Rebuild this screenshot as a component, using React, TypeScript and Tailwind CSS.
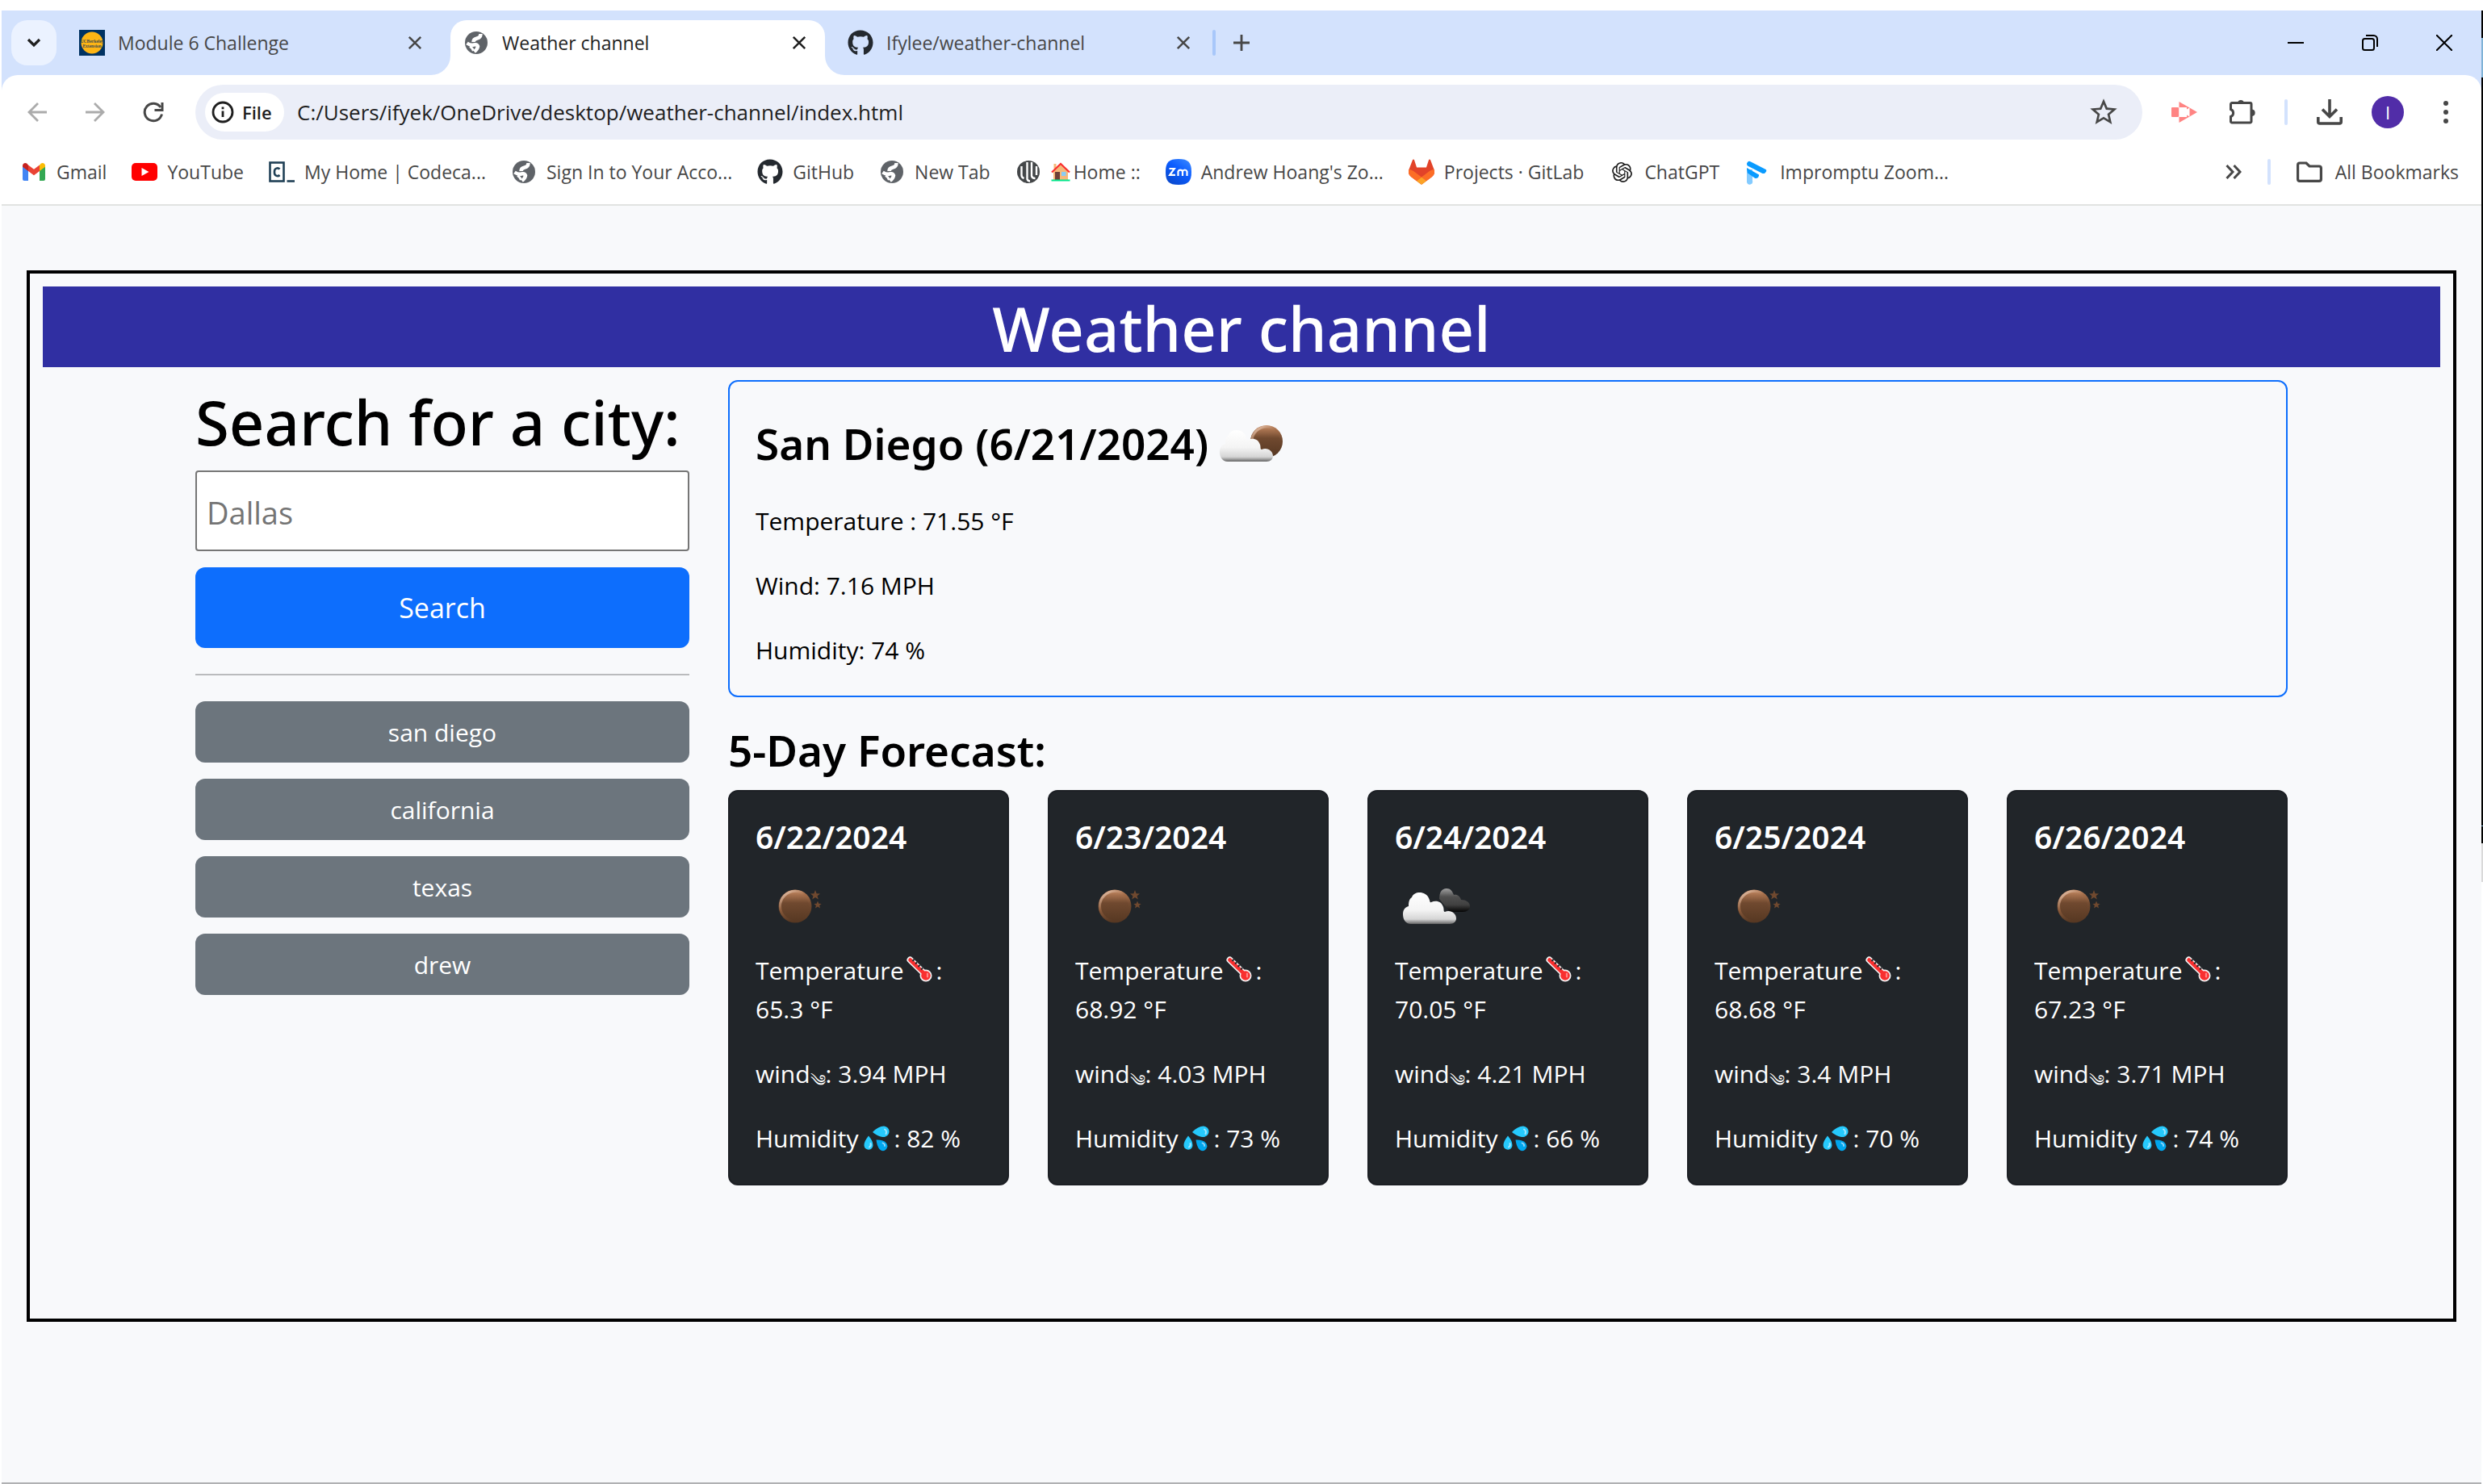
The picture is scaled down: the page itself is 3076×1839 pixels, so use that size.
import type { ReactNode } from "react";
import { FaGithub } from "react-icons/fa";
import { MdStarBorder } from "react-icons/md";
import { SiOpenai } from "react-icons/si";

/* ---------- small icons ---------- */

function CrossIcon({ className }: { className: string }) {
  return (
    <svg viewBox="0 0 20 20" className={className} fill="none" stroke="currentColor" strokeWidth="2.8">
      <path d="M2 2L18 18M18 2L2 18" />
    </svg>
  );
}

function GlobeIcon() {
  return (
    <svg viewBox="0 0 32 32" className="size-8 shrink-0" aria-hidden="true">
      <circle cx="16" cy="16" r="14" fill="#5f6368" />
      <g fill="none" stroke="#fff" strokeLinejoin="round">
        <path d="M21.500 5Q21.500 9.500 17 10.500T12.500 15" strokeWidth="4.500" />
        <path d="M4.500 16.500Q9 19.500 13 18.500T18 20.500Q17.500 24 13.500 27" strokeWidth="4.500" />
        <path d="M8 20.500Q11 22 12.500 26" strokeWidth="3" />
      </g>
    </svg>
  );
}

function BerkeleyIcon() {
  return (
    <svg viewBox="0 0 32 32" className="size-8 shrink-0" aria-hidden="true">
      <rect width="32" height="32" fill="#003262" />
      <circle cx="16" cy="16" r="13.500" fill="#fdb515" />
      <text x="16" y="15.500" textAnchor="middle" fontSize="5.500" fontFamily="Liberation Serif, serif" fontWeight="700" fill="#3b4a52">UCBerkeley</text>
      <text x="16" y="21.500" textAnchor="middle" fontSize="5.500" fontFamily="Liberation Serif, serif" fontWeight="700" fill="#3b4a52">Extension</text>
    </svg>
  );
}

function GmailIcon() {
  return (
    <svg viewBox="0 0 32 32" className="size-8" aria-hidden="true">
      <path d="M2 9v16a2 2 0 0 0 2 2h5V14z" fill="#4285f4" />
      <path d="M30 9v16a2 2 0 0 1-2 2h-5V14z" fill="#34a853" />
      <path d="M23 7.500V15l7-5.200V8.200c0-2.700-3-4.200-5.200-2.600z" fill="#fbbc04" />
      <path d="M9 15V7.500l7 5.300 7-5.300V15l-7 5.300z" fill="#ea4335" />
      <path d="M2 8.200v1.600L9 15V7.500L7.200 5.600C5 4 2 5.500 2 8.200z" fill="#c5221f" />
    </svg>
  );
}

function YouTubeIcon() {
  return (
    <svg viewBox="0 0 32 32" className="size-8" aria-hidden="true">
      <rect y="5" width="32" height="22" rx="5" fill="#f00" />
      <path d="M12.500 11v10l9-5z" fill="#fff" />
    </svg>
  );
}

function CodecademyIcon() {
  return (
    <svg viewBox="0 0 32 32" className="size-8" aria-hidden="true" fill="none" stroke="#204056">
      <rect x="1.500" y="4.500" width="17" height="23" strokeWidth="2.600" />
      <path d="M13.500 12.500a3.800 3.800 0 0 0-6.500 2.500v2.500a3.800 3.800 0 0 0 6.500 2.500" strokeWidth="2.600" />
      <path d="M22.500 27.500H32" strokeWidth="2.600" />
    </svg>
  );
}

function PianoIcon() {
  return (
    <svg viewBox="0 0 32 32" className="size-8" aria-hidden="true">
      <circle cx="16" cy="16" r="14" fill="#444749" />
      <path d="M7.500 9v11q0 3 3 4M14.500 4v21q1 2.500 3.500 2.500M20 4v17q.5 3 4.500 3M26 9v11" fill="none" stroke="#fff" strokeWidth="2.400" />
    </svg>
  );
}

function ZoomIcon() {
  return (
    <svg viewBox="0 0 32 32" className="size-8" aria-hidden="true">
      <defs>
        <linearGradient id="zoomFill" x1="1" y1="0" x2="0.300" y2="1">
          <stop offset="0" stopColor="#3f8cff" />
          <stop offset="0.500" stopColor="#0b5cff" />
          <stop offset="1" stopColor="#0a4ad0" />
        </linearGradient>
      </defs>
      <path d="M16 0C28 0 32 4 32 16S28 32 16 32 0 28 0 16 4 0 16 0Z" fill="url(#zoomFill)" />
      <path d="M4.500 12h6.300L5.200 19.800h6.800M15.500 21v-5.500a3 3 0 0 1 5.500 0V21M21 15.500a2.900 2.900 0 0 1 5.500 0V21" fill="none" stroke="#fff" strokeWidth="2.200" />
    </svg>
  );
}

function GitLabIcon() {
  return (
    <svg viewBox="94 94 192 192" className="size-8" aria-hidden="true">
      <path fill="#e24329" d="m282.830 170.730-.270-.690-26.140-68.220a6.810 6.810 0 0 0-2.690-3.240 7 7 0 0 0-8 .430 7 7 0 0 0-2.320 3.520l-17.650 54h-71.470l-17.650-54a6.860 6.860 0 0 0-2.320-3.530 7 7 0 0 0-8-.430 6.870 6.870 0 0 0-2.690 3.240L97.440 170l-.260.690a48.540 48.540 0 0 0 16.100 56.100l.090.070.240.170 39.820 29.820 19.700 14.910 12 9.060a8.070 8.070 0 0 0 9.760 0l12-9.060 19.700-14.910 40.060-30 .100-.080a48.560 48.560 0 0 0 16.080-56.040Z" />
      <path fill="#fc6d26" d="m282.830 170.730-.270-.690a88.300 88.300 0 0 0-35.150 15.800L190 229.250c19.550 14.790 36.570 27.640 36.570 27.640l40.060-30 .100-.080a48.560 48.560 0 0 0 16.100-56.080Z" />
      <path fill="#fca326" d="m153.430 256.890 19.700 14.910 12 9.060a8.070 8.070 0 0 0 9.760 0l12-9.060 19.700-14.910S209.550 244 190 229.250c-19.550 14.750-36.570 27.640-36.570 27.640Z" />
      <path fill="#fc6d26" d="M132.580 185.840A88.190 88.190 0 0 0 97.440 170l-.260.690a48.540 48.540 0 0 0 16.100 56.100l.090.070.240.170 39.820 29.820L190 229.210Z" />
    </svg>
  );
}

function ImpromptuIcon() {
  return (
    <svg viewBox="0 0 32 32" className="size-8" aria-hidden="true">
      <path d="M3 13h7v14a3 3 0 0 1-7 2z" fill="#84cbff" />
      <path d="M3 12.500V11l15 8.500v1.200q-1.500 4-5 3L4 17.500z" fill="#0a9bff" />
      <path d="M3 5.500Q4.500 1.500 8 3.500L26.500 13q2 1.500-1 4.500-2 1.200-4 0L4 8.500Q2.800 7.500 3 5.500Z" fill="#0a9bff" />
    </svg>
  );
}

function HouseIcon() {
  return (
    <svg viewBox="0 0 24 24" className="size-6 shrink-0" role="img" aria-label="house">
      <path d="M3.500 2h3v6h-3zM3 11l9-8.500L21 11v11H3z" fill="#f5b97a" />
      <rect x="5" y="12" width="6" height="10" fill="#6d4038" />
      <rect x="13" y="12" width="5.500" height="5" fill="#8accf5" />
      <path d="M1 12.500L12 2l11 10.500" fill="none" stroke="#f92f2f" strokeWidth="2.200" />
      <path d="M0.500 22.500h23" stroke="#00e68a" strokeWidth="2" />
    </svg>
  );
}

function RecorderIcon() {
  return (
    <svg viewBox="0 0 32 32" className="size-8" aria-hidden="true">
      <rect y="10" width="9" height="12" rx="1" fill="#ff8483" />
      <path d="M9.500 3L32 16 9.500 29z" fill="#ff8483" />
      <path d="M9.500 10H19v2.500l3.500-2v11L19 19.500V22H9.500z" fill="#fff" />
    </svg>
  );
}

function PuzzleIcon() {
  return (
    <svg viewBox="-1 1 34 34" className="size-[34px]" aria-hidden="true">
      <path d="M3 6.500H25.500a1.500 1.500 0 0 1 1.500 1.500V29.500a1.500 1.500 0 0 1-1.500 1.500H3a1.500 1.500 0 0 1-1.500-1.500V23.500a4.800 4.800 0 0 0 0-9V8A1.500 1.500 0 0 1 3 6.500Z" fill="none" stroke="#474747" strokeWidth="3" />
      <path d="M10 6a4.200 4.200 0 0 1 8 0zM28 14.500a4.300 4.300 0 0 1 0 8.500z" fill="#474747" />
    </svg>
  );
}

function ThermometerIcon() {
  return (
    <svg viewBox="0 0 32 32" className="mx-1 inline size-8 align-[-3px]" role="img" aria-label="thermometer">
      <path d="M4.500 4.500L22 21.500" stroke="#f4f4f4" strokeWidth="8" strokeLinecap="round" />
      <circle cx="24" cy="24" r="7.500" fill="#f4f4f4" />
      <path d="M4.500 4.500L22 21.500" stroke="#f92f2f" strokeWidth="4.600" strokeLinecap="round" />
      <circle cx="24" cy="24" r="5.800" fill="#f92f2f" />
      <path d="M9.500 4L7.500 6M13 7.500L11 9.500M16.500 11L14.500 13M20 14.500L18 16.500" stroke="#212529" strokeWidth="1.800" />
      <path d="M26 21.500v4" stroke="#ff8687" strokeWidth="2.200" strokeLinecap="round" />
    </svg>
  );
}

function DropletsIcon() {
  return (
    <svg viewBox="0 0 32 32" className="mx-[6px] inline size-8 align-[-5px]" role="img" aria-label="sweat droplets">
      <path d="M11 8Q18 .5 25 .5a6.800 6.800 0 0 1 6.500 7.500c-.5 4-4.500 6.500-8.500 6Q17 13 11 8Z" fill="#26c9fc" />
      <path d="M26 4.500q3 2 1.500 5.500" fill="none" stroke="#9fe6ff" strokeWidth="2" strokeLinecap="round" />
      <path d="M6 12.500Q0 20 .5 24.500a5.500 5.500 0 0 0 11-.5Q11.500 19 6 12.500Z" fill="#26c9fc" />
      <path d="M8.500 22q1 3-1.500 4.500" fill="none" stroke="#9fe6ff" strokeWidth="2" strokeLinecap="round" />
      <path d="M15.500 17.500Q24 17 27.500 21t.5 8q-4 4.500-8.500 0-3-3.500-4-11.500Z" fill="#00a6ed" />
      <path d="M23.500 21.500q3 1 2.500 3.500" fill="none" stroke="#8fd8ff" strokeWidth="1.800" strokeLinecap="round" />
    </svg>
  );
}

/* ---------- weather pictures ---------- */

const frontCloud =
  "M20 72C13 72 10 66 10 60c0-6 3-9 7-10 0-6 1-9 4-11 3-8 17-8 21 1 2 4 1 6 3 5 6-3 13-1 15 6 1 3 0 6 2 6 7-3 14 2 14 8 0 4-3 7-8 7z";
const backCloud = "M55 41c0-8 3-13 9-13 5 0 7 3 9 8 4-1 8 2 9 6 6 0 11 3 11 8 0 4-3 7-9 7H68z";

function WeatherPicture({ kind }: { kind: "moon" | "moonCloud" | "clouds" }) {
  const label = kind === "moon" ? "clear night" : kind === "moonCloud" ? "few clouds" : "broken clouds";
  return (
    <svg viewBox="0 0 100 100" className="size-[100px] shrink-0" role="img" aria-label={label}>
      <defs>
        <linearGradient id={`${kind}-disc`} x1="0" y1="0" x2="0" y2="1">
          <stop offset="0" stopColor="#c88a62" />
          <stop offset="0.400" stopColor="#70492f" />
          <stop offset="1" stopColor="#553722" />
        </linearGradient>
        <linearGradient id={`${kind}-rim`} x1="0" y1="0" x2="0.600" y2="0.900">
          <stop offset="0" stopColor="#f7dcc9" />
          <stop offset="0.500" stopColor="#a36b46" stopOpacity="0.600" />
          <stop offset="1" stopColor="#70492f" stopOpacity="0" />
        </linearGradient>
        <linearGradient id={`${kind}-cloud`} x1="0" y1="0" x2="0" y2="1">
          <stop offset="0" stopColor="#fff" />
          <stop offset="0.550" stopColor="#f4f4f4" />
          <stop offset="0.850" stopColor="#d5d5d5" />
          <stop offset="1" stopColor="#666" />
        </linearGradient>
        <linearGradient id={`${kind}-back`} x1="0" y1="0" x2="0" y2="1">
          <stop offset="0" stopColor="#a0a0a0" />
          <stop offset="0.350" stopColor="#505050" />
          <stop offset="0.700" stopColor="#404040" />
          <stop offset="1" stopColor="#050505" />
        </linearGradient>
      </defs>
      {kind === "moon" && (
        <>
          <circle cx="49" cy="50" r="20.500" fill={`url(#${kind}-disc)`} />
          <circle cx="49" cy="50" r="18.500" fill="none" stroke={`url(#${kind}-rim)`} strokeWidth="3" />
          <path d="M74 30l1.600 4.200 4.400.3-3.400 2.800 1.200 4.300-3.800-2.500-3.800 2.500 1.200-4.300-3.400-2.800 4.400-.3z" fill="#70492f" />
          <path d="M77 43.500l1.300 3.200 3.400.2-2.600 2.200.9 3.400-3-1.900-3 1.900.9-3.400-2.600-2.200 3.400-.2z" fill="#70492f" />
        </>
      )}
      {kind === "moonCloud" && (
        <>
          <circle cx="68" cy="47" r="20" fill={`url(#${kind}-disc)`} />
          <circle cx="68" cy="47" r="18" fill="none" stroke={`url(#${kind}-rim)`} strokeWidth="3" />
        </>
      )}
      {kind === "clouds" && <path d={backCloud} fill={`url(#${kind}-back)`} />}
      {kind !== "moon" && <path d={frontCloud} fill={`url(#${kind}-cloud)`} />}
    </svg>
  );
}

/* ---------- browser window ---------- */

function Tab({ icon, title }: { icon: ReactNode; title: string }) {
  return (
    <div className="mr-3 flex h-14 w-[464px] items-center gap-4 pr-[22px] pl-4 text-[#474747]">
      {icon}
      <span className="flex-1 whitespace-nowrap">{title}</span>
      <button aria-label={`Close ${title}`} className="flex size-5 items-center justify-center">
        <CrossIcon className="size-[18px]" />
      </button>
    </div>
  );
}

function TitleBar() {
  return (
    <div className="flex h-20 items-center bg-[#d3e2fd] pl-3 text-[23px]">
      <button aria-label="Search tabs" className="mr-3 flex size-14 items-center justify-center rounded-[20px] bg-[#ebf2ff]">
        <svg viewBox="0 0 20 20" className="size-5" fill="none" stroke="#1f1f1f" strokeWidth="3.200">
          <path d="M3 6l7 7 7-7" />
        </svg>
      </button>
      <Tab icon={<BerkeleyIcon />} title="Module 6 Challenge" />
      <div className="relative mr-3 flex h-[68px] w-[464px] items-center gap-4 self-end rounded-t-[20px] bg-white pr-[22px] pb-3 pl-4 text-[#1f1f1f]">
        <svg viewBox="0 0 24 24" className="absolute bottom-0 -left-6 size-6 fill-white" aria-hidden="true">
          <path d="M24 0v24H0A24 24 0 0 0 24 0Z" />
        </svg>
        <svg viewBox="0 0 24 24" className="absolute -right-6 bottom-0 size-6 fill-white" aria-hidden="true">
          <path d="M0 0v24h24A24 24 0 0 1 0 0Z" />
        </svg>
        <GlobeIcon />
        <span className="flex-1 whitespace-nowrap">Weather channel</span>
        <button aria-label="Close Weather channel" className="flex size-5 items-center justify-center">
          <CrossIcon className="size-[18px]" />
        </button>
      </div>
      <Tab icon={<FaGithub className="size-8 text-[#24292f]" />} title="Ifylee/weather-channel" />
      <div className="-ml-2 h-8 w-1 rounded-full bg-[#a8c7fa]" />
      <button aria-label="New tab" className="flex size-16 items-center justify-center">
        <svg viewBox="0 0 20 20" className="size-5" stroke="#474747" strokeWidth="2.800">
          <path d="M10 0v20M0 10h20" />
        </svg>
      </button>
      <div className="flex flex-1 justify-end">
        <button aria-label="Minimize" className="flex h-14 w-[92px] items-center justify-center">
          <svg viewBox="0 0 20 20" className="size-5" stroke="#000" strokeWidth="2">
            <path d="M0 10h20" />
          </svg>
        </button>
        <button aria-label="Restore" className="flex h-14 w-[92px] items-center justify-center">
          <svg viewBox="0 0 20 20" className="size-5" fill="none" stroke="#000" strokeWidth="2">
            <rect x="1" y="5" width="14" height="14" rx="2.500" />
            <path d="M5 1h9.500A4.500 4.500 0 0 1 19 5.500V15" />
          </svg>
        </button>
        <button aria-label="Close window" className="flex h-14 w-[92px] items-center justify-center">
          <svg viewBox="0 0 20 20" className="size-5" stroke="#000" strokeWidth="2">
            <path d="M0 0l20 20M20 0L0 20" />
          </svg>
        </button>
      </div>
    </div>
  );
}

function ToolButton({ label, children }: { label: string; children: ReactNode }) {
  return (
    <button aria-label={label} className="flex h-[68px] w-[72px] shrink-0 items-center justify-center">
      {children}
    </button>
  );
}

function Toolbar() {
  return (
    <div className="bg-[#d3e2fd]">
      <div className="flex items-center rounded-t-[20px] bg-white pt-3 pr-2 pl-2">
        <ToolButton label="Back">
          <svg viewBox="0 0 24 24" className="size-6" fill="none" stroke="#ababab" strokeWidth="2.800">
            <path d="M24 12H2M13 1L2 12l11 11" />
          </svg>
        </ToolButton>
        <ToolButton label="Forward">
          <svg viewBox="0 0 24 24" className="size-6" fill="none" stroke="#ababab" strokeWidth="2.800">
            <path d="M0 12h22M11 1l11 11-11 11" />
          </svg>
        </ToolButton>
        <ToolButton label="Reload">
          <svg viewBox="0 0 26 26" className="size-[26px]" fill="none" stroke="#474747" strokeWidth="3">
            <path d="M23.500 15.500A10.800 10.800 0 1 1 22 7" />
            <path d="M24 1v9.500h-9.500" />
          </svg>
        </ToolButton>
        <div className="mx-4 flex h-[68px] flex-1 items-center rounded-full bg-[#ebeef8] pr-7 pl-3">
          <button className="flex h-12 w-[98px] items-center gap-2.5 rounded-full bg-white pl-2 text-[22px] font-semibold text-[#1f1f1f]">
            <svg viewBox="0 0 28 28" className="size-7" fill="none" stroke="#1f1f1f" strokeWidth="2.800">
              <circle cx="14" cy="14" r="12" />
              <path d="M14 12.500v7.500M14 7.500v2.800" />
            </svg>
            File
          </button>
          <input
            aria-label="Address"
            defaultValue="C:/Users/ifyek/OneDrive/desktop/weather-channel/index.html"
            className="ml-4 min-w-0 flex-1 bg-transparent text-[26px] text-[#1f1f1f] outline-none"
          />
          <button aria-label="Bookmark this tab" className="flex items-center">
            <MdStarBorder className="size-10 text-[#474747]" />
          </button>
        </div>
        <ToolButton label="Screen recorder">
          <RecorderIcon />
        </ToolButton>
        <ToolButton label="Extensions">
          <PuzzleIcon />
        </ToolButton>
        <div className="mx-4 h-8 w-1 rounded-full bg-[#d3e2fd]" />
        <ToolButton label="Downloads">
          <svg viewBox="0 0 32 32" className="size-8" fill="none" stroke="#474747" strokeWidth="3.600">
            <path d="M16 0v20M7 12.500l9 9 9-9" />
            <path d="M1.800 22v6a2 2 0 0 0 2 2h24.400a2 2 0 0 0 2-2v-6" />
          </svg>
        </ToolButton>
        <ToolButton label="Profile">
          <span className="flex size-10 items-center justify-center rounded-full bg-[#512da8] text-[22px] text-white">I</span>
        </ToolButton>
        <ToolButton label="Menu">
          <svg viewBox="0 0 6 28" className="h-7 w-1.5" fill="#474747">
            <circle cx="3" cy="3" r="3" />
            <circle cx="3" cy="14" r="3" />
            <circle cx="3" cy="25" r="3" />
          </svg>
        </ToolButton>
      </div>
    </div>
  );
}

const bookmarks: { icon: ReactNode; title: ReactNode }[] = [
  { icon: <GmailIcon />, title: "Gmail" },
  { icon: <YouTubeIcon />, title: "YouTube" },
  { icon: <CodecademyIcon />, title: "My Home | Codeca..." },
  { icon: <GlobeIcon />, title: "Sign In to Your Acco..." },
  { icon: <FaGithub className="size-8 text-[#24292f]" />, title: "GitHub" },
  { icon: <GlobeIcon />, title: "New Tab" },
  { icon: <PianoIcon />, title: <><HouseIcon /><span className="pl-1">Home ::</span></> },
  { icon: <ZoomIcon />, title: "Andrew Hoang's Zo..." },
  { icon: <GitLabIcon />, title: "Projects · GitLab" },
  { icon: <span className="flex size-8 items-center justify-center"><SiOpenai className="size-[25px] text-[#1f1f1f]" /></span>, title: "ChatGPT" },
  { icon: <ImpromptuIcon />, title: "Impromptu Zoom..." },
];

function BookmarksBar() {
  return (
    <nav className="flex h-[82px] items-center gap-[31px] border-b-2 border-[#e1e3e1] bg-white pr-7 pl-6 text-[23px] text-[#474747]">
      {bookmarks.map((b, i) => (
        <a key={i} href="#" className="flex shrink-0 items-center gap-3 whitespace-nowrap">
          {b.icon}
          <span className="flex items-center">{b.title}</span>
        </a>
      ))}
      <div className="flex flex-1 items-center justify-end gap-8">
        <button aria-label="More bookmarks">
          <svg viewBox="0 0 20 18" className="h-[18px] w-5" fill="none" stroke="#474747" strokeWidth="3">
            <path d="M1.500 1L9 9l-7.500 8M10.500 1L18 9l-7.500 8" />
          </svg>
        </button>
        <div className="h-8 w-1 rounded-full bg-[#d3e2fd]" />
        <button className="flex items-center gap-4 whitespace-nowrap">
          <svg viewBox="0 0 32 26" className="h-[26px] w-8" fill="none" stroke="#474747" strokeWidth="3.200">
            <path d="M4 2h8l4 4h12a2.400 2.400 0 0 1 2.400 2.400V22a2.400 2.400 0 0 1-2.400 2.400H4A2.400 2.400 0 0 1 1.600 22V4.400A2.400 2.400 0 0 1 4 2Z" />
          </svg>
          All Bookmarks
        </button>
      </div>
    </nav>
  );
}

/* ---------- weather page ---------- */

const history = ["san diego", "california", "texas", "drew"];

const forecast: { date: string; kind: "moon" | "clouds"; temp: string; wind: string; humidity: string }[] = [
  { date: "6/22/2024", kind: "moon", temp: "65.3", wind: "3.94", humidity: "82" },
  { date: "6/23/2024", kind: "moon", temp: "68.92", wind: "4.03", humidity: "73" },
  { date: "6/24/2024", kind: "clouds", temp: "70.05", wind: "4.21", humidity: "66" },
  { date: "6/25/2024", kind: "moon", temp: "68.68", wind: "3.4", humidity: "70" },
  { date: "6/26/2024", kind: "moon", temp: "67.23", wind: "3.71", humidity: "74" },
];

function SearchPanel() {
  return (
    <aside className="flex flex-col">
      <label htmlFor="city" className="mb-3 pt-1 font-['Noto_Sans',sans-serif] text-[76px] leading-[96px] font-medium whitespace-nowrap">
        Search for a city:
      </label>
      <input
        id="city"
        placeholder="Dallas"
        className="h-[100px] w-full rounded-[4px] border-2 border-[#767676] bg-white px-3 pt-1 text-[38px] placeholder:text-[#757575]"
      />
      <button className="mt-5 h-[100px] rounded-xl bg-[#0d6efd] text-[34px] text-white">Search</button>
      <hr className="my-8 border-t-2 border-[#babbbd]" />
      <div className="flex flex-col gap-5">
        {history.map((city) => (
          <button key={city} className="h-[76px] rounded-xl bg-[#6c757d] text-[30px] text-white">
            {city}
          </button>
        ))}
      </div>
    </aside>
  );
}

function CurrentWeather() {
  return (
    <section className="rounded-xl border-2 border-[#0d6efd] px-8 pt-8 pb-8">
      <div className="mb-4 flex h-[101px] items-center gap-1 pb-3">
        <h3 className="font-['Noto_Sans',sans-serif] text-[53px] leading-[67px] font-semibold">San Diego (6/21/2024)</h3>
        <WeatherPicture kind="moonCloud" />
      </div>
      <div className="flex flex-col gap-8 text-[30px] leading-[48px]">
        <p>Temperature : 71.55 °F</p>
        <p>Wind: 7.16 MPH</p>
        <p>Humidity: 74 %</p>
      </div>
    </section>
  );
}

function Forecast() {
  return (
    <section>
      <h4 className="mt-8 mb-4 font-['Noto_Sans',sans-serif] text-[53px] leading-[67px] font-semibold">5-Day Forecast:</h4>
      <div className="grid grid-cols-5 gap-12">
        {forecast.map((d) => (
          <article key={d.date} className="rounded-xl border-2 border-[#1c1f24] bg-[#212529] p-8 text-[30px] leading-[48px] text-white">
            <h5 className="mb-3 font-['Noto_Sans',sans-serif] text-[39px] font-semibold">{d.date}</h5>
            <div className="mb-1.5 flex">
              <WeatherPicture kind={d.kind} />
            </div>
            <p className="mb-8">
              Temperature
              <ThermometerIcon />: <br />
              {d.temp} °F
            </p>
            <p className="mb-8 whitespace-nowrap">
              wind<span className="align-[-4px] text-[20px] leading-none">༄</span>: {d.wind} MPH
            </p>
            <p className="whitespace-nowrap">
              Humidity
              <DropletsIcon />: {d.humidity} %
            </p>
          </article>
        ))}
      </div>
    </section>
  );
}

export default function App() {
  return (
    <div className="flex min-h-screen bg-white pt-[13px] font-['Open_Sans','Noto_Sans',sans-serif] text-black">
      <div className="flex min-w-0 flex-1 flex-col pl-0.5">
        <TitleBar />
        <Toolbar />
        <BookmarksBar />
        <main className="flex-1 border-b-2 border-[#b0b1b3] bg-[#f8f9fb] px-[31px] py-20">
          <div className="border-4 border-black p-4 pb-[165px]">
            <h1 className="bg-[#302fa2] pt-1 text-center font-['Noto_Sans',sans-serif] text-[76px] leading-[96px] font-medium text-white">
              Weather channel
            </h1>
            <div className="mx-auto mt-4 grid max-w-[2592px] grid-cols-4 gap-12">
              <SearchPanel />
              <div className="col-span-3">
                <CurrentWeather />
                <Forecast />
              </div>
            </div>
          </div>
        </main>
      </div>
      <div className="flex w-0.5 flex-col" aria-hidden="true">
        <div className="h-[34px] bg-black" />
        <div className="h-[49px] bg-[#7fb2d6]" />
        <div className="h-[927px] bg-black" />
        <div className="h-px bg-[#7fb2d6]" />
        <div className="h-[21px] bg-black" />
        <div className="h-12 bg-[#d9d9d9]" />
      </div>
    </div>
  );
}
